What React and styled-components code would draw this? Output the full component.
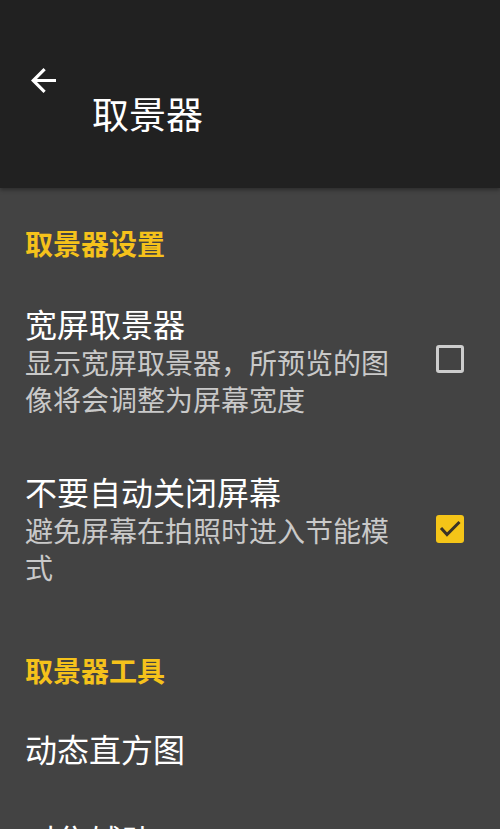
import React from "react";
import styled, { createGlobalStyle } from "styled-components";

const Global = createGlobalStyle`
  html, body { margin: 0; padding: 0; background: #434343; }
  body { font-family: "Noto Sans CJK SC", "Noto Sans", sans-serif; }
  * { box-sizing: border-box; }
`;

const Page = styled.div`
  width: 500px;
  height: 829px;
  overflow: hidden;
  background: #434343;
  display: flex;
  flex-direction: column;
`;

const Header = styled.header`
  background: #212121;
  height: 188px;
  padding: 68px 0 0 31px;
  box-shadow: 0 2px 4px rgba(0, 0, 0, 0.35);
  position: relative;
  z-index: 1;
  flex-shrink: 0;
`;

const BackButton = styled.div`
  width: 25px;
  height: 25px;
  display: flex;
  color: #ffffff;
`;

const Title = styled.h1`
  margin: -2px 0 0 61px;
  font-size: 37px;
  line-height: 44px;
  font-weight: 400;
  color: #ffffff;
`;

const SectionTitle = styled.div`
  padding: ${(p) => (p.$first ? "35px" : "37px")} 25px 14px;
  font-size: 28px;
  line-height: 40px;
  font-weight: 700;
  color: #f5c21b;
`;

const Row = styled.div`
  display: flex;
  align-items: center;
  gap: 40px;
  padding: ${(p) => (p.$compact ? "24px 36px 27px 25px" : "26px 36px 27px 25px")};
`;

const TextCol = styled.div`
  flex: 1;
  min-width: 0;
`;

const ItemTitle = styled.div`
  font-size: 32px;
  line-height: 40px;
  color: #ffffff;
`;

const Summary = styled.div`
  font-size: 28px;
  line-height: 37px;
  color: #c9c9c9;
  margin-top: 1px;
`;

const Box = styled.div`
  width: 28px;
  height: 28px;
  flex-shrink: 0;
  border-radius: 3px;
  border: ${(p) => (p.$checked ? "none" : "3px solid #cdcdcd")};
  background: ${(p) => (p.$checked ? "#f5c518" : "transparent")};
  display: flex;
  margin-top: ${(p) => (p.$checked ? "0" : "-3px")};
`;

const Check = ({ checked }) => (
  <Box $checked={checked}>
    {checked && (
      <svg width="28" height="28" viewBox="0 0 28 28">
        <path d="M5 13l6 6.5L23.5 7" fill="none" stroke="#3a3327" strokeWidth="3" />
      </svg>
    )}
  </Box>
);

const Item = ({ title, summary, checkbox, checked }) => (
  <Row $compact={!summary}>
    <TextCol>
      <ItemTitle>{title}</ItemTitle>
      {summary && <Summary>{summary}</Summary>}
    </TextCol>
    {checkbox && <Check checked={checked} />}
  </Row>
);

export default function App() {
  return (
    <>
      <Global />
      <Page>
        <Header>
          <BackButton>
            <svg width="25" height="25" viewBox="4 4 16 16">
              <path
                fill="currentColor"
                d="M20 11H7.83l5.59-5.59L12 4l-8 8 8 8 1.41-1.41L7.83 13H20v-2z"
              />
            </svg>
          </BackButton>
          <Title>取景器</Title>
        </Header>
        <SectionTitle $first>取景器设置</SectionTitle>
        <Item
          title="宽屏取景器"
          summary="显示宽屏取景器，所预览的图像将会调整为屏幕宽度"
          checkbox
          checked={false}
        />
        <Item
          title="不要自动关闭屏幕"
          summary="避免屏幕在拍照时进入节能模式"
          checkbox
          checked
        />
        <SectionTitle>取景器工具</SectionTitle>
        <Item title="动态直方图" />
        <Item title="对焦辅助" />
      </Page>
    </>
  );
}
